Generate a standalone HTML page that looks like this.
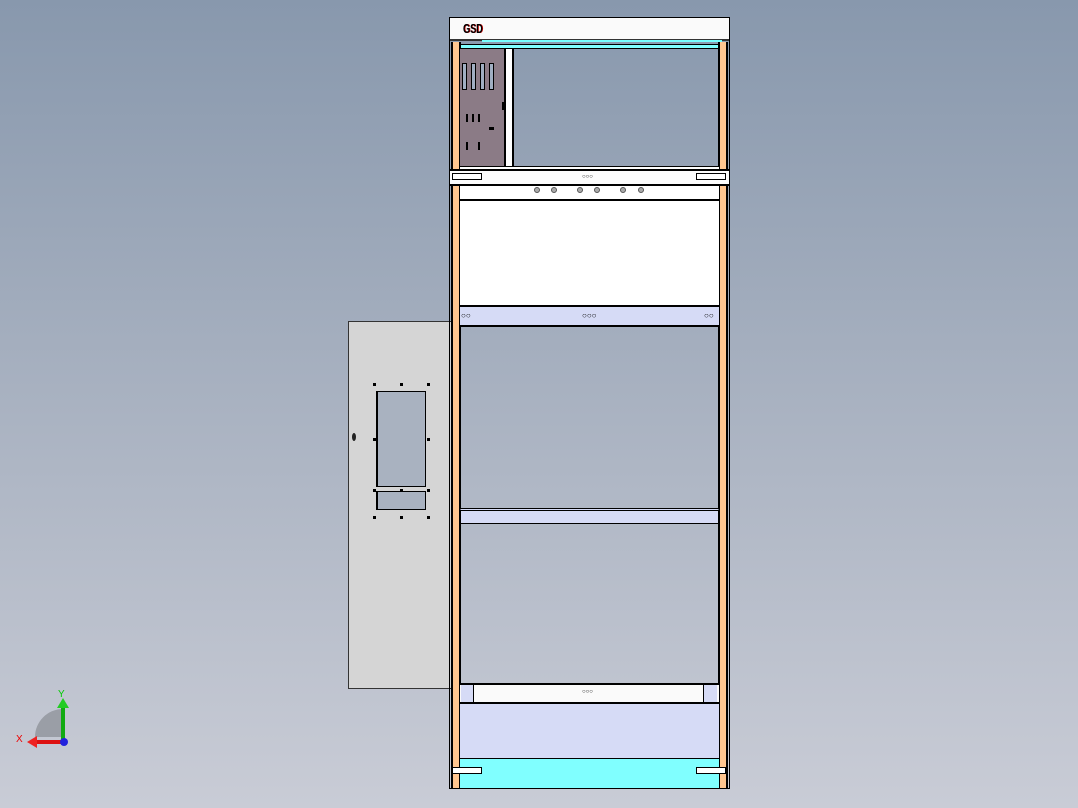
<!DOCTYPE html>
<html><head><style>
body{margin:0;width:1078px;height:808px;overflow:hidden;background:linear-gradient(#8898ad,#a9b2c1 50%,#c9ccd6);position:relative;font-family:"Liberation Sans",sans-serif}
div{position:absolute;box-sizing:border-box}
.o{background:#ffc690;border-left:2px solid #000;border-right:2px solid #000}
.dot{width:3px;height:3px;background:#000}
.hole{width:6px;height:6px;border:1px solid #555;border-radius:50%;background:#aaa}
</style></head><body>
<div style="left:348px;top:321px;width:103px;height:368px;background:#d5d5d5;border:1px solid #333;border-right:none"></div>
<div style="left:376px;top:391px;width:50px;height:96px;background:#a9b2c0;border:1.5px solid #000;border-left-width:2px"></div>
<div style="left:376px;top:491px;width:50px;height:19px;background:#a9b2c0;border:1.5px solid #000;border-left-width:2px"></div>
<div style="left:352px;top:433px;width:4px;height:8px;background:#222;border-radius:50%"></div>
<div class="dot" style="left:373px;top:383px"></div><div class="dot" style="left:400px;top:383px"></div><div class="dot" style="left:427px;top:383px"></div>
<div class="dot" style="left:373px;top:438px"></div><div class="dot" style="left:427px;top:438px"></div>
<div class="dot" style="left:373px;top:489px"></div><div class="dot" style="left:400px;top:489px"></div><div class="dot" style="left:427px;top:489px"></div>
<div class="dot" style="left:373px;top:516px"></div><div class="dot" style="left:400px;top:516px"></div><div class="dot" style="left:427px;top:516px"></div>
<div style="left:449px;top:17px;width:281px;height:772px;border:1.5px solid #000"></div>
<div style="left:450px;top:18px;width:279px;height:23px;background:#fafafa;border-bottom:2px solid #333"></div>
<div style="left:463px;top:21px;font-size:13px;font-weight:bold;color:#000;text-shadow:1px 0 #c00;transform:scaleX(.7);transform-origin:left">GSD</div>
<div style="left:482px;top:40px;width:240px;height:2px;background:#7ff"></div>
<div class="o" style="left:451px;top:42px;width:10px;height:746px"></div>
<div class="o" style="left:718px;top:42px;width:10px;height:746px"></div>
<div style="left:460px;top:44px;width:259px;height:5px;background:#80ffff;border:1px solid #000"></div>
<div style="left:460px;top:49px;width:46px;height:118px;background:#8b7b86;border-right:2px solid #000"></div>
<div style="left:506px;top:49px;width:8px;height:118px;background:#fff;border-right:2px solid #000"></div>
<div style="left:462px;top:63px;width:5px;height:27px;background:#a0afc2;border:1px solid #000"></div>
<div style="left:471px;top:63px;width:5px;height:27px;background:#a0afc2;border:1px solid #000"></div>
<div style="left:480px;top:63px;width:5px;height:27px;background:#a0afc2;border:1px solid #000"></div>
<div style="left:489px;top:63px;width:5px;height:27px;background:#a0afc2;border:1px solid #000"></div>
<div style="left:466px;top:114px;width:8px;height:8px;border-left:2px solid #000;border-right:2px solid #000"></div>
<div style="left:478px;top:114px;width:2px;height:8px;background:#000"></div>
<div style="left:466px;top:142px;width:2px;height:8px;background:#000"></div>
<div style="left:478px;top:142px;width:2px;height:8px;background:#000"></div>
<div style="left:489px;top:127px;width:5px;height:3px;background:#000"></div>
<div style="left:502px;top:102px;width:2px;height:8px;background:#000"></div>
<div style="left:460px;top:166px;width:259px;height:3px;background:#fff;border-top:1px solid #000"></div>
<div style="left:450px;top:169px;width:279px;height:17px;background:#fcfcfc;border-top:2px solid #000;border-bottom:2px solid #000"></div>
<div style="left:452px;top:173px;width:30px;height:7px;background:#fff;border:1px solid #000"></div>
<div style="left:696px;top:173px;width:30px;height:7px;background:#fff;border:1px solid #000"></div>
<div style="left:582px;top:174px;font-size:6px">○○○</div>
<div style="left:460px;top:186px;width:259px;height:15px;background:#fff;border-bottom:2px solid #000"></div>
<div class="hole" style="left:534px;top:187px"></div><div class="hole" style="left:551px;top:187px"></div><div class="hole" style="left:577px;top:187px"></div><div class="hole" style="left:594px;top:187px"></div><div class="hole" style="left:620px;top:187px"></div><div class="hole" style="left:638px;top:187px"></div>
<div style="left:460px;top:201px;width:259px;height:105px;background:#fff"></div>
<div style="left:460px;top:305px;width:259px;height:22px;background:#d6dbf6;border-top:2px solid #000;border-bottom:2px solid #000"></div>
<div style="left:461px;top:311px;font-size:8px">○○</div><div style="left:582px;top:311px;font-size:8px">○○○</div><div style="left:704px;top:311px;font-size:8px">○○</div>
<div style="left:460px;top:508px;width:259px;height:16px;background:#d6dbf6;border:1px solid #000;border-top:3px double #000"></div>
<div style="left:460px;top:683px;width:259px;height:21px;background:#fafafa;border-top:2px solid #000;border-bottom:2px solid #000"></div>
<div style="left:461px;top:685px;width:13px;height:17px;background:#d6dbf6;border-right:1px solid #000"></div>
<div style="left:703px;top:685px;width:14px;height:17px;background:#d6dbf6;border-left:1px solid #000"></div>
<div style="left:582px;top:689px;font-size:6px">○○○</div>
<div style="left:460px;top:704px;width:259px;height:55px;background:#d6dbf6"></div>
<div style="left:460px;top:758px;width:259px;height:30px;background:#80ffff;border-top:1px solid #000"></div>
<div style="left:452px;top:767px;width:30px;height:7px;background:#fff;border:1px solid #000"></div>
<div style="left:696px;top:767px;width:30px;height:7px;background:#fff;border:1px solid #000"></div>
<svg style="position:absolute;left:10px;top:685px" width="70" height="70">
<path d="M25 52 A28 28 0 0 1 53 24 L53 52Z" fill="#9a9ea6"/>
<line x1="53" y1="57" x2="53" y2="22" stroke="#1a1" stroke-width="4"/><path d="M47 23 L53 13 L59 23Z" fill="#2c2"/>
<line x1="54" y1="57" x2="26" y2="57" stroke="#d11" stroke-width="4"/><path d="M27 51 L17 57 L27 63Z" fill="#e22"/>
<circle cx="54" cy="57" r="4" fill="#22d"/>
<text x="48" y="12" font-size="10" fill="#0c0">Y</text><text x="6" y="57" font-size="10" fill="#e00">X</text>
</svg>
</body></html>
